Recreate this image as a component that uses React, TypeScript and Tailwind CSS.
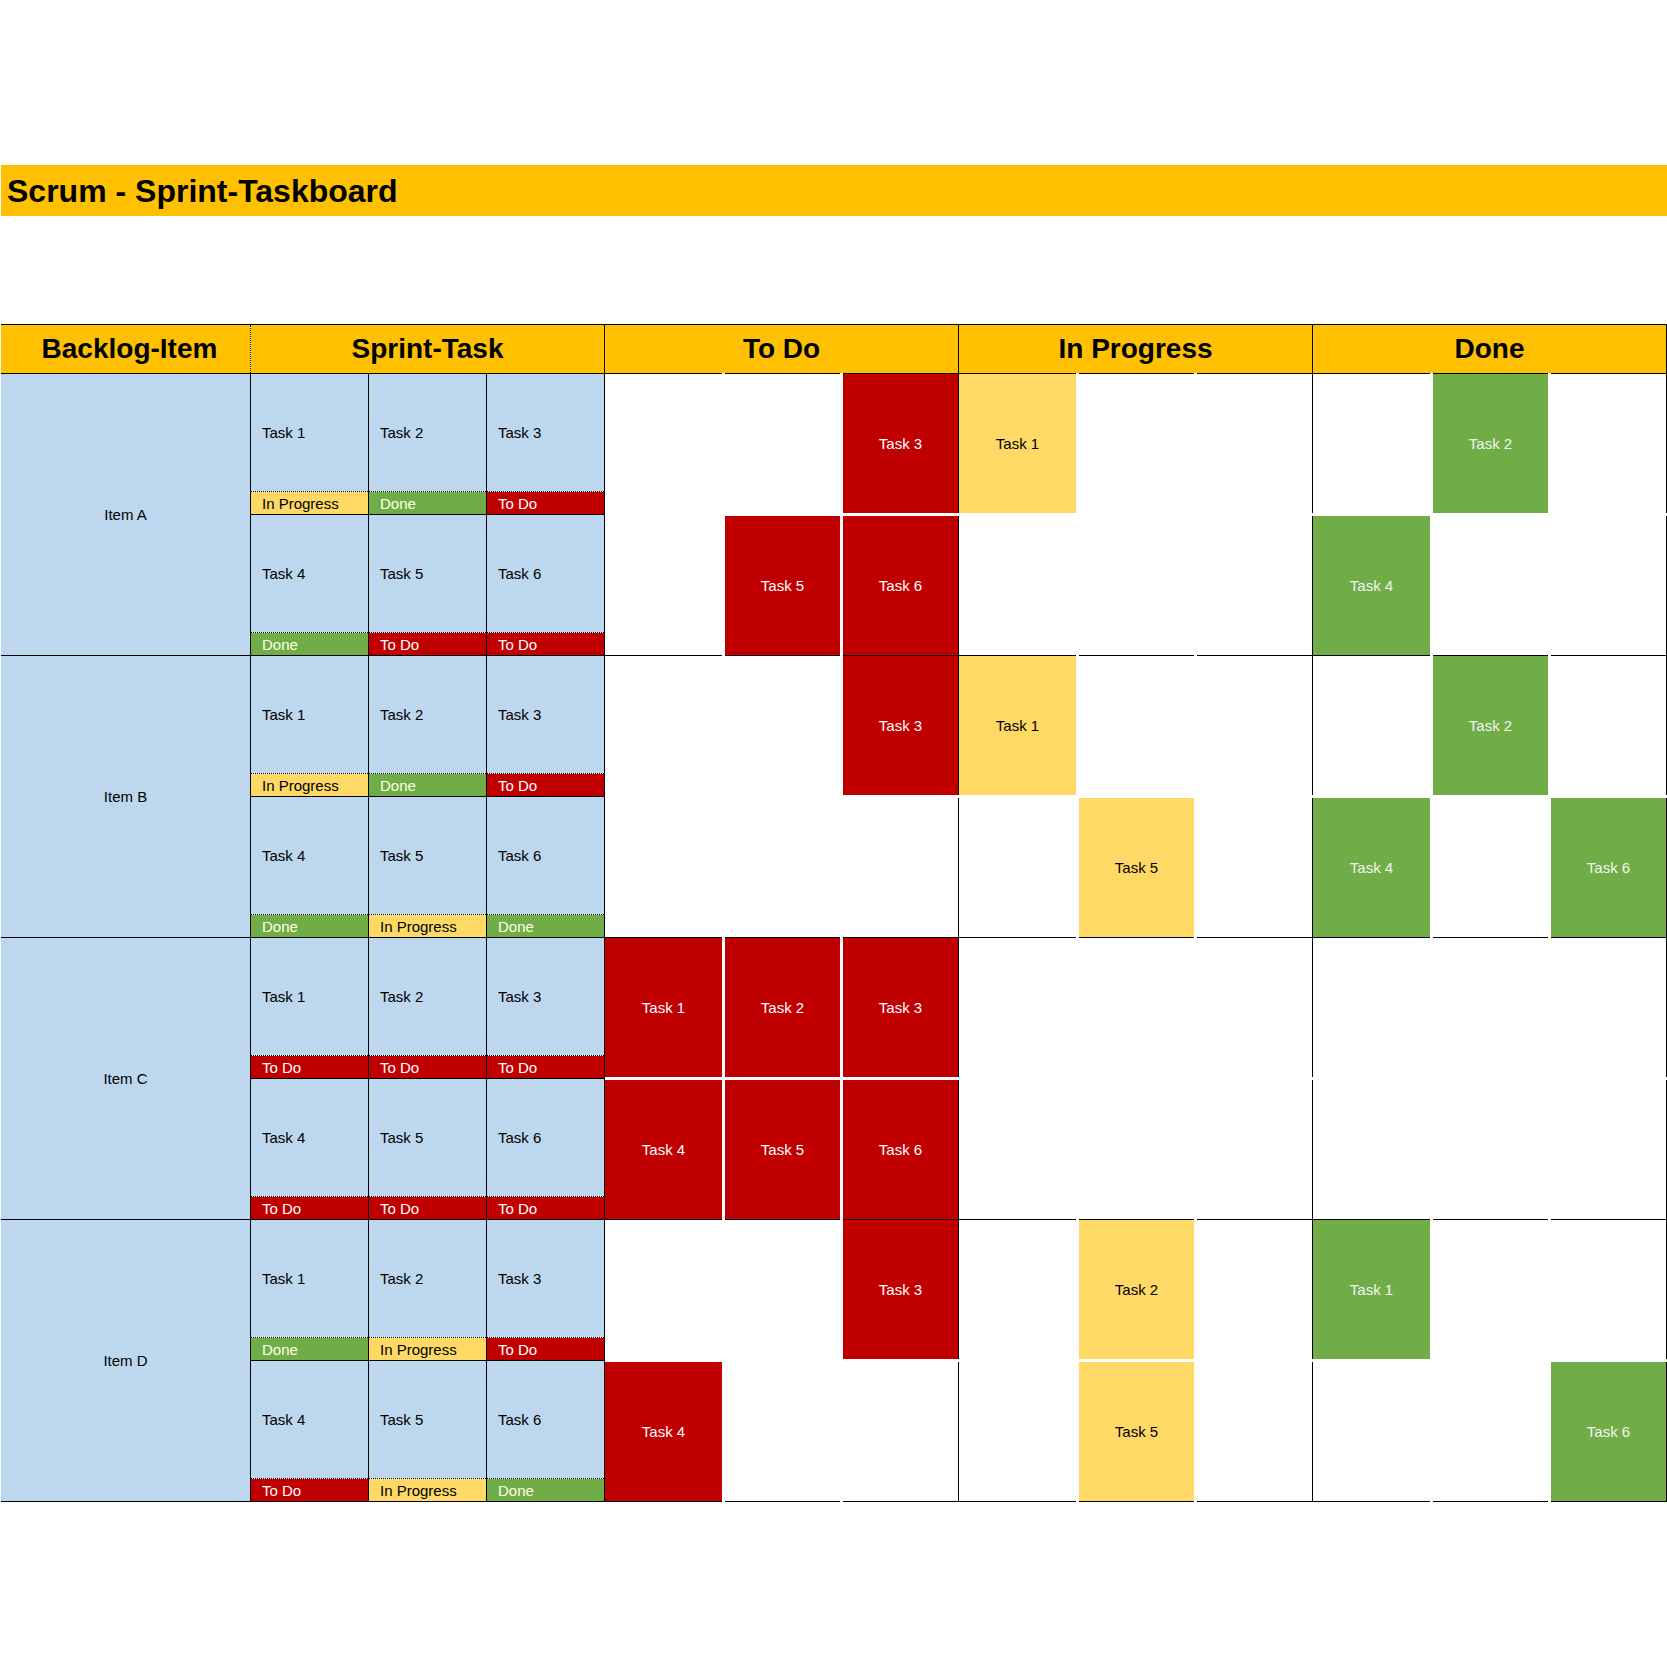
import type { ReactNode } from "react";

type Status = "To Do" | "In Progress" | "Done";

const STATUS_STYLE: Record<Status, string> = {
  "To Do": "bg-[#C00000] text-white",
  "In Progress": "bg-[#FFD966] text-black",
  Done: "bg-[#70AD47] text-[#FFFFE8]",
};

// card colour follows the board section: To Do / In Progress / Done
const CARD_STYLE = ["bg-[#C00000] text-white", "bg-[#FFD966] text-black", "bg-[#70AD47] text-[#F4F4F4]"];

const ITEMS: { name: string; status: Status[][]; board: Record<number, string>[] }[] = [
  {
    name: "Item A",
    status: [
      ["In Progress", "Done", "To Do"],
      ["Done", "To Do", "To Do"],
    ],
    board: [
      { 2: "Task 3", 3: "Task 1", 7: "Task 2" },
      { 1: "Task 5", 2: "Task 6", 6: "Task 4" },
    ],
  },
  {
    name: "Item B",
    status: [
      ["In Progress", "Done", "To Do"],
      ["Done", "In Progress", "Done"],
    ],
    board: [
      { 2: "Task 3", 3: "Task 1", 7: "Task 2" },
      { 4: "Task 5", 6: "Task 4", 8: "Task 6" },
    ],
  },
  {
    name: "Item C",
    status: [
      ["To Do", "To Do", "To Do"],
      ["To Do", "To Do", "To Do"],
    ],
    board: [
      { 0: "Task 1", 1: "Task 2", 2: "Task 3" },
      { 0: "Task 4", 1: "Task 5", 2: "Task 6" },
    ],
  },
  {
    name: "Item D",
    status: [
      ["Done", "In Progress", "To Do"],
      ["To Do", "In Progress", "Done"],
    ],
    board: [
      { 2: "Task 3", 4: "Task 2", 6: "Task 1" },
      { 0: "Task 4", 4: "Task 5", 8: "Task 6" },
    ],
  },
];

const SECTION_WIDTH = ["w-[353px]", "w-[354px]", "w-[355px]"];
const SECTION_BORDER = ["", "border-l border-black", "border-x border-black"];
const CELL_WIDTH = ["w-[118px]", "w-[118px]", "w-[117px]"];
const CELL_PAD = ["pr-[1px]", "pl-[2px] pr-[1px]", "pl-[2px]"];

function BoardRow({ className = "", cell }: { className?: string; cell: (col: number) => ReactNode }) {
  return (
    <div className={`flex ${className}`}>
      {[0, 1, 2].map((s) => (
        <div key={s} className={`flex ${SECTION_WIDTH[s]} ${SECTION_BORDER[s]}`}>
          {[0, 1, 2].map((i) => (
            <div key={i} className={`flex ${CELL_WIDTH[i]} ${CELL_PAD[i]}`}>
              {cell(s * 3 + i)}
            </div>
          ))}
        </div>
      ))}
    </div>
  );
}

function Rule() {
  return (
    <div className="flex h-px">
      <div className="w-[604px] bg-black" />
      <BoardRow cell={() => <div className="flex-1 bg-black" />} />
    </div>
  );
}

function SprintHalf({ statuses, first }: { statuses: Status[]; first: number }) {
  const widths = ["w-[118px] border-l", "w-[118px] border-l", "w-[119px] border-x"];
  return (
    <div className="flex h-[140px]">
      {statuses.map((status, i) => (
        <div key={i} className={`flex flex-col border-black ${widths[i]}`}>
          <div className="flex h-[117px] items-center bg-[#BDD7EE] pl-[11px] pt-[2px]">Task {first + i}</div>
          <div className="h-px border-t border-dotted border-black bg-white" />
          <div className={`flex h-[22px] items-center pl-[11px] pt-[2px] ${STATUS_STYLE[status]}`}>{status}</div>
        </div>
      ))}
    </div>
  );
}

function BoardHalf({ cards }: { cards: Record<number, string> }) {
  return (
    <BoardRow
      className="h-[139px]"
      cell={(col) =>
        cards[col] ? (
          <div className={`flex flex-1 items-center justify-center pt-[2px] ${CARD_STYLE[Math.floor(col / 3)]}`}>
            {cards[col]}
          </div>
        ) : null
      }
    />
  );
}

export default function App() {
  return (
    <div className="h-[1667px] w-[1667px] overflow-hidden bg-white pt-[165px] font-['Liberation_Sans',Arial,sans-serif] text-[15px] text-black">
      <div className="ml-px flex h-[51px] items-center bg-[#FFC000] pl-[6px] text-[32px] font-bold">
        Scrum - Sprint-Taskboard
      </div>

      <div className="ml-px mt-[108px] w-[1666px]">
        <div className="h-px bg-black" />
        <div className="flex h-[48px] bg-[#FFC000] text-[28px] font-bold">
          <div className="flex w-[249px] items-center justify-center pl-[8px]">Backlog-Item</div>
          <div className="w-px border-l border-dotted border-black bg-white" />
          <div className="flex w-[354px] items-center justify-center border-r border-black">Sprint-Task</div>
          <div className="flex w-[353px] items-center justify-center">To Do</div>
          <div className="flex w-[354px] items-center justify-center border-l border-black">In Progress</div>
          <div className="flex w-[355px] items-center justify-center border-x border-black">Done</div>
        </div>
        <Rule />

        {ITEMS.map((item) => (
          <div key={item.name}>
            <div className="flex h-[281px]">
              <div className="flex w-[249px] items-center justify-center bg-[#BDD7EE] pt-[2px]">{item.name}</div>
              <div className="flex w-[355px] flex-col">
                <SprintHalf statuses={item.status[0]} first={1} />
                <div className="h-px bg-black" />
                <SprintHalf statuses={item.status[1]} first={4} />
              </div>
              <div className="flex w-[1062px] flex-col">
                <BoardHalf cards={item.board[0]} />
                <div className="h-[3px]" />
                <BoardHalf cards={item.board[1]} />
              </div>
            </div>
            <Rule />
          </div>
        ))}
      </div>
    </div>
  );
}
